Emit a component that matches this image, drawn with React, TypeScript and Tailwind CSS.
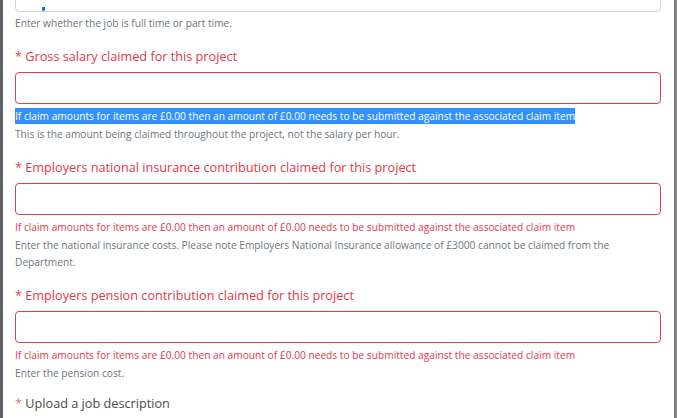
import React from "react";

const ERR =
  "If claim amounts for items are £0.00 then an amount of £0.00 needs to be submitted against the associated claim item";

function Label({ text, dark }: { text: string; dark?: boolean }) {
  return (
    <div
      className={`text-[12.7px] leading-[21px] mb-[5px] ${dark ? "text-[#4a4a4a]" : "text-[#e0394b]"}`}
    >
      <span className={dark ? "text-[#e8707c]" : "text-[#e0394b]"}>*</span> {text}
    </div>
  );
}

function Field({
  label,
  help,
  selected,
}: {
  label: string;
  help: React.ReactNode;
  selected?: boolean;
}) {
  return (
    <div className="mt-[14px]">
      <Label text={label} />
      <div className="h-[32px] border border-[#e04050] rounded-[4px] bg-white" />
      <div className="mt-[5px] text-[10.2px] leading-[14px]">
        {selected ? (
          <span className="bg-[#3390ff] text-white py-[1px]">{ERR}</span>
        ) : (
          <span className="text-[#e0394b]">{ERR}</span>
        )}
      </div>
      <div className="mt-[3px] text-[10.2px] leading-[17px] text-[#6c757d]">{help}</div>
    </div>
  );
}

export default function App() {
  return (
    <div
      className="w-[677px] h-[418px] overflow-hidden flex bg-white"
      style={{ fontFamily: '"Open Sans", "Noto Sans", sans-serif' }}
    >
      <div className="w-[3px] shrink-0 bg-[#5d6266]" />
      <div className="flex-1 pl-[12px] pr-[13px]">
        <div className="-mt-[27px] h-[39px] border border-[#ced4da] rounded-[4px] flex items-end pl-[13px]">
          <div className="ml-[13px] w-[3px] h-[4px] bg-[#1f6fd1] rounded-b-sm" />
        </div>
        <div className="mt-[3px] text-[10.2px] leading-[17px] text-[#6c757d]">
          Enter whether the job is full time or part time.
        </div>
        <Field
          label="Gross salary claimed for this project"
          selected
          help="This is the amount being claimed throughout the project, not the salary per hour."
        />
        <Field
          label="Employers national insurance contribution claimed for this project"
          help="Enter the national insurance costs. Please note Employers National Insurance allowance of £3000 cannot be claimed from the Department."
        />
        <Field
          label="Employers pension contribution claimed for this project"
          help="Enter the pension cost."
        />
        <div className="mt-[11px]">
          <Label text="Upload a job description" dark />
        </div>
      </div>
      <div className="w-[3px] shrink-0 bg-[#8a8a8a] border-l border-[#6e6e6e]" />
    </div>
  );
}
